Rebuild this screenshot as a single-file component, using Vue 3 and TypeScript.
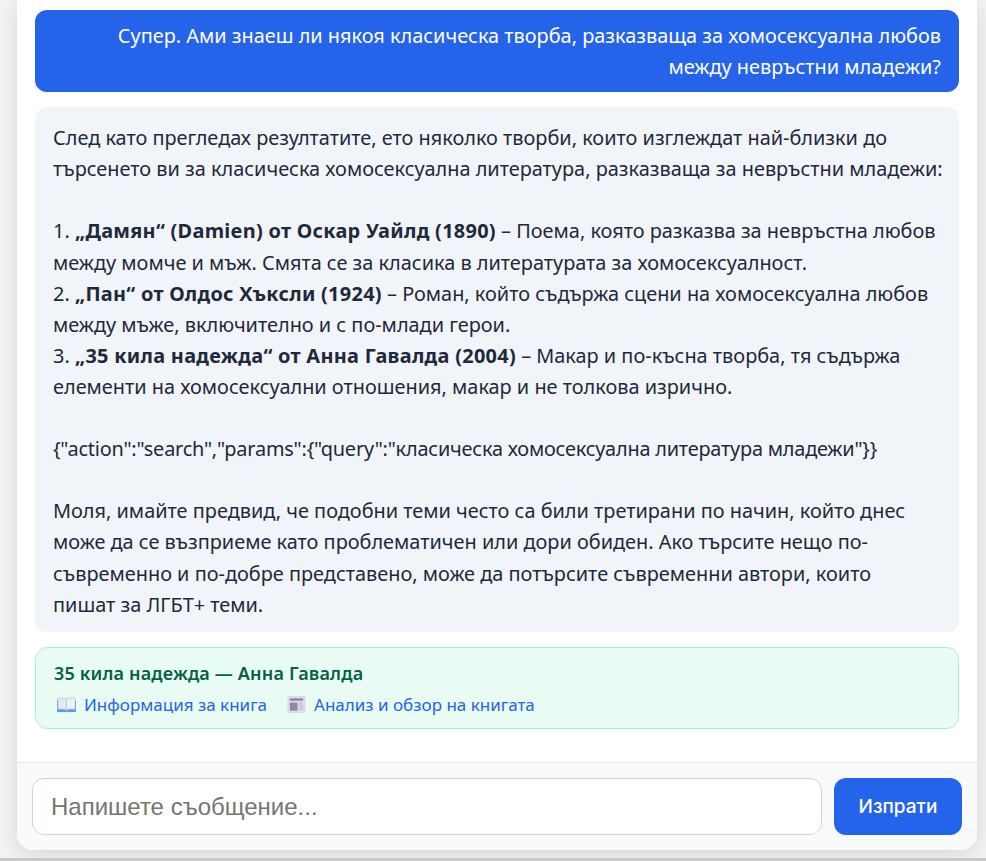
<template>
  <div class="page">
    <div class="chat">
      <div class="messages">
        <div class="bubble user">
          Супер. Ами знаеш ли някоя класическа творба, разказваща за хомосексуална любов<br />между невръстни младежи?
        </div>

        <div class="bubble bot">
          <p class="fixed">След като прегледах резултатите, ето няколко творби, които изглеждат най-близки до<br />търсенето ви за класическа хомосексуална литература, разказваща за невръстни младежи:</p>
          <p>
            <template v-for="item in works" :key="item.title">
              <span class="item">{{ item.num }} <strong>{{ item.title }}</strong> {{ item.text }}</span>
            </template>
          </p>
          <p class="action">{{ actionJson }}</p>
          <p class="fixed">Моля, имайте предвид, че подобни теми често са били третирани по начин, който днес<br />може да се възприеме като проблематичен или дори обиден. Ако търсите нещо по-<br />съвременно и по-добре представено, може да потърсите съвременни автори, които<br />пишат за ЛГБТ+ теми.</p>
        </div>

        <div class="book-card">
          <div class="book-title">35 кила надежда — Анна Гавалда</div>
          <div class="book-links">
            <a class="book-link" href="#">
              <svg class="emoji" viewBox="0 0 20 20" aria-hidden="true">
                <path d="M0 5.5h20V18H0z" fill="#5f9fd8" />
                <path d="M1 3.5c3-.8 7-.6 9 .8V16c-2-1.3-6-1.5-9-.8z" fill="#e4e7f5" stroke="#b4bcd4" stroke-width=".7" />
                <path d="M19 3.5c-3-.8-7-.6-9 .8V16c2-1.3 6-1.5 9-.8z" fill="#eff1f9" stroke="#b4bcd4" stroke-width=".7" />
              </svg>
              <span>Информация за книга</span>
            </a>
            <a class="book-link" href="#">
              <svg class="emoji" viewBox="0 0 20 20" aria-hidden="true">
                <path d="M1 1.5h18v17H1z" fill="#e3dbee" stroke="#d3c8e2" stroke-width=".6" />
                <path d="M3 3.5h14v2.6H3z" fill="#8f8a98" />
                <path d="M3 8h8v8.5H3z" fill="#8f8a98" />
                <path d="M12.4 8.4h4.6M12.4 10.6h4.6M12.4 12.8h4.6M12.4 15h4.6" stroke="#b5aec2" stroke-width=".9" />
              </svg>
              <span>Анализ и обзор на книгата</span>
            </a>
          </div>
        </div>
      </div>

      <form class="composer" @submit.prevent>
        <input class="composer-input" type="text" placeholder="Напишете съобщение..." />
        <button class="send" type="submit">Изпрати</button>
      </form>
    </div>
    <div class="window-edge"></div>
  </div>
</template>

<script setup lang="ts">
interface Work {
  num: string;
  title: string;
  text: string;
}

const works: Work[] = [
  {
    num: '1.',
    title: '„Дамян“ (Damien) от Оскар Уайлд (1890)',
    text: '– Поема, която разказва за невръстна любов между момче и мъж. Смята се за класика в литературата за хомосексуалност.',
  },
  {
    num: '2.',
    title: '„Пан“ от Олдос Хъксли (1924)',
    text: '– Роман, който съдържа сцени на хомосексуална любов между мъже, включително и с по-млади герои.',
  },
  {
    num: '3.',
    title: '„35 кила надежда“ от Анна Гавалда (2004)',
    text: '– Макар и по-късна творба, тя съдържа елементи на хомосексуални отношения, макар и не толкова изрично.',
  },
];

const actionJson = '{"action":"search","params":{"query":"класическа хомосексуална литература младежи"}}';
</script>

<style>
html,
body {
  margin: 0;
  background: #f4f4f4;
}
</style>

<style scoped>
.page {
  height: 861px;
  display: flex;
  flex-direction: column;
  overflow: hidden;
}

.chat {
  width: 960px;
  height: 850px;
  flex-shrink: 0;
  margin-left: 17px;
  display: flex;
  flex-direction: column;
  background: #fff;
  border-radius: 0 0 16px 16px;
  box-shadow: 0 4px 24px rgba(0, 0, 0, 0.13);
  overflow: hidden;
  font-family: "Noto Sans", "Open Sans", sans-serif;
}

.window-edge {
  margin-top: auto;
  height: 3px;
  background: #c9c9c5;
  position: relative;
}

.messages {
  flex: 1;
  min-height: 0;
  display: flex;
  flex-direction: column;
  gap: 15px;
  padding: 10px 18px;
}

.bubble {
  border-radius: 12px;
  font-size: 19.9px;
  line-height: 31.1px;
}

.user {
  background: #2563eb;
  color: #fff;
  padding: 10px 18px;
  text-align: right;
}

.bot {
  background: #f1f5f9;
  color: #1e293b;
  padding: 15px 18px 12px;
}

.bot p {
  margin: 0 0 31.1px;
}

.bot p:last-child {
  margin-bottom: 0;
}

.fixed {
  white-space: nowrap;
}

.action {
  letter-spacing: -0.2px;
}

.item {
  display: block;
}

.item strong {
  font-weight: 700;
  letter-spacing: 0.3px;
}

.book-card {
  background: #e9fcf4;
  border: 1px solid #a7f3d0;
  border-radius: 12px;
  padding: 11px 18px 9px;
}

.book-title {
  color: #065f46;
  font-size: 18px;
  font-weight: 600;
  letter-spacing: 0.17px;
  line-height: 28px;
}

.book-links {
  display: flex;
  gap: 17px;
  margin-top: 4px;
}

.book-link {
  display: flex;
  align-items: center;
  gap: 8px;
  color: #2563eb;
  font-size: 17px;
  line-height: 28px;
  text-decoration: none;
}

.emoji {
  width: 19px;
  height: 19px;
  margin-left: 3px;
}

.composer {
  flex-shrink: 0;
  display: flex;
  gap: 12px;
  padding: 15px;
  background: #f8fafc;
  border-top: 1px solid #e2e8f0;
}

.composer-input {
  flex: 1;
  height: 57px;
  box-sizing: border-box;
  padding: 0 18px;
  background: #fff;
  border: 1px solid #cbd5e1;
  border-radius: 12px;
  font-family: "Liberation Sans", Arial, sans-serif;
  font-size: 24px;
  outline: none;
}

.composer-input::placeholder {
  color: #757575;
}

.send {
  width: 128px;
  height: 57px;
  border: 0;
  border-radius: 12px;
  background: #2563eb;
  color: #fff;
  font-family: "Inter", "Liberation Sans", sans-serif;
  font-size: 19px;
  font-weight: 500;
}
</style>
